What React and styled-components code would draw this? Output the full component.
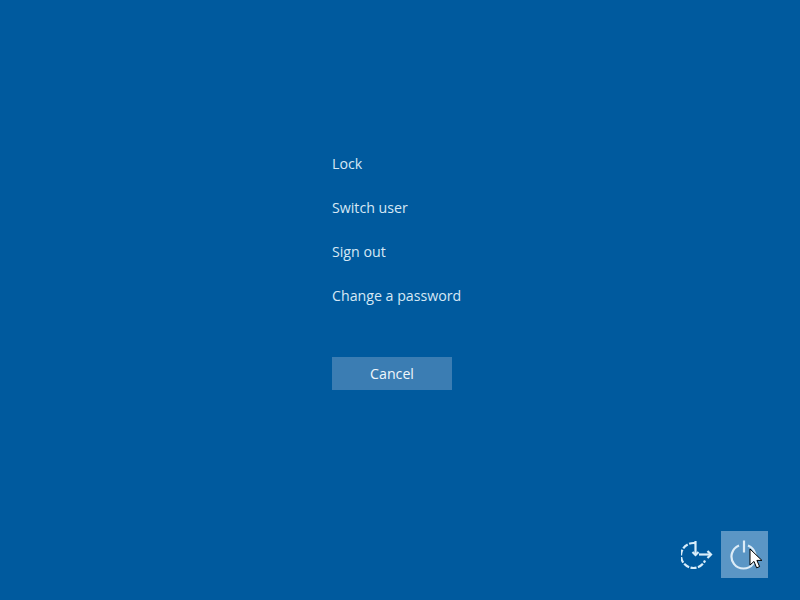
import React from "react";
import styled, { createGlobalStyle } from "styled-components";

const Global = createGlobalStyle`
  html, body { margin: 0; padding: 0; background: #005a9e; }
`;

const Screen = styled.div`
  width: 800px;
  height: 600px;
  overflow: hidden;
  display: flex;
  flex-direction: column;
  background: #005a9e;
  font-family: "Open Sans", "Noto Sans", sans-serif;
  color: #d6e8f5;
`;

const Menu = styled.nav`
  display: flex;
  flex-direction: column;
  align-items: flex-start;
  padding: 142px 0 0 332px;
`;

const MenuItem = styled.div`
  height: 44px;
  line-height: 44px;
  font-size: 14.2px;
  white-space: nowrap;
`;

const CancelButton = styled.div`
  width: 120px;
  height: 33px;
  margin: 39px 0 0 332px;
  display: flex;
  align-items: center;
  justify-content: center;
  background: #3b7db3;
  color: #f0f7fc;
  font-size: 14.2px;
`;

const Tray = styled.div`
  margin-top: auto;
  padding: 0 32px 22px 0;
  display: flex;
  justify-content: flex-end;
  align-items: center;
`;

const TrayButton = styled.div`
  position: relative;
  width: 47px;
  height: 47px;
  display: flex;
  align-items: center;
  justify-content: center;
  background: ${(p) => (p.$hover ? "#5b96c5" : "transparent")};
`;

const Cursor = styled.svg`
  position: absolute;
  left: 28px;
  top: 17px;
`;

const EaseIcon = () => (
  <svg width="34" height="30" viewBox="0 0 34 30" fill="none" stroke="#d8edfa" strokeWidth="2.2">
    <path d="M14 3.1A12.5 12.5 0 1 0 24 20.5" strokeDasharray="6 1.5" />
    <path d="M14.5 1V15" />
    <path d="M11.5 12l3 3 3-3" />
    <path d="M18 14.5H30" />
    <path d="M26.5 11l3.5 3.5-3.5 3.5" />
  </svg>
);

const PowerIcon = () => (
  <svg width="30" height="32" viewBox="0 0 30 32" fill="none" stroke="#dcecf7" strokeWidth="2.2">
    <path d="M9 6.4A12 12 0 1 0 18 6.4" />
    <path d="M14 1.5V13.5" />
  </svg>
);

export default function App() {
  return (
    <>
      <Global />
      <Screen>
        <Menu>
          <MenuItem>Lock</MenuItem>
          <MenuItem>Switch user</MenuItem>
          <MenuItem>Sign out</MenuItem>
          <MenuItem>Change a password</MenuItem>
        </Menu>
        <CancelButton>Cancel</CancelButton>
        <Tray>
          <TrayButton>
            <EaseIcon />
          </TrayButton>
          <TrayButton $hover>
            <PowerIcon />
            <Cursor width="14" height="22" viewBox="0 0 14 22">
              <path d="M1 1v16l4-3.6 2.6 6.4 3-1.2-2.7-6.2h5z" fill="#fff" stroke="#000" strokeWidth="1" />
            </Cursor>
          </TrayButton>
        </Tray>
      </Screen>
    </>
  );
}
